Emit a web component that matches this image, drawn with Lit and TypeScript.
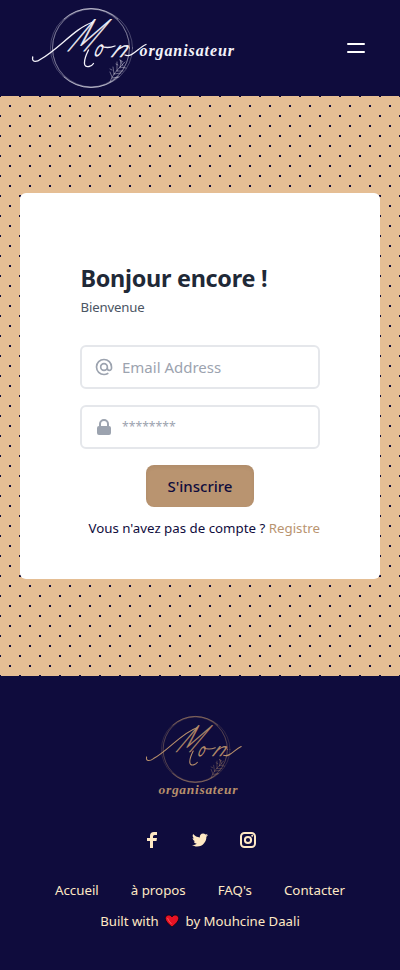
import { LitElement, html, css, svg } from "lit";
import { customElement, property } from "lit/decorators.js";

@customElement("brand-logo")
class BrandLogo extends LitElement {
  @property({ type: Boolean }) stacked = false;

  static styles = css`
    :host { display: block; line-height: 0; }
    svg { display: block; overflow: visible; }
    .line { fill: none; stroke: currentColor; stroke-linecap: round; }
    .script { font: italic 300 43px Lato, sans-serif; fill: currentColor; }
    .word { font: italic 700 16px "Liberation Serif", serif; fill: currentColor; }
    .small { font-size: 13.5px; }
  `;

  render() {
    const emblem = svg`
      <g class="line" stroke-width="1">
        <ellipse cx="59" cy="40" rx="38.500" ry="39.500" opacity=".3"></ellipse>
        <ellipse cx="58" cy="40" rx="39.500" ry="39" opacity=".25"></ellipse>
        <ellipse cx="60.500" cy="40" rx="40" ry="39" opacity=".25"></ellipse>
        <path d="M32 11Q44 .5 59 .5T86 11M32 69Q44 79.500 59 79.500T86 69" opacity=".5"></path>
      </g>
      <g class="line" stroke-width=".8" opacity=".5">
        <path d="M78 74Q80 66 93 54M80 69l-2-5m4 2l-1-7m4 4l0-9m3 6l1-7m2 5l-3-6M80 70l7-1m-5-3l7-1m-4-2l6 0m-3-4l6 1M78 61l2 1m4-6l2 1m2-5l3 2"></path>
      </g>
      <g class="line" stroke-width="1.300">
        <path d="M.7 49C-.5 55 5 54 9 51C27 41 43 20 61 14"></path>
        <path d="M56.500 42C51 53 51 60 57 58.500Q60 58 61.500 55.500"></path>
        <path d="M69 38Q75 41 83 38M93 47C100 50 106 40 114 36.500"></path>
      </g>
      <text class="script" transform="matrix(.62 0 -.8 1.040 34 43)" stroke="currentColor" stroke-width=".8">M</text>
      <text class="script" transform="matrix(.34 0 -.18 .52 61.500 47.500)" stroke="currentColor" stroke-width="1.500">o</text>
      <text class="script" transform="matrix(.64 0 -.34 .54 78 48.500)" stroke="currentColor" stroke-width="1">n</text>`;
    return this.stacked
      ? html`<svg width="96" height="82" viewBox="0 0 96 82" role="img" aria-label="Mon organisateur">
          <g transform="scale(.835)">${emblem}</g>
          <text class="word small" x="12.500" y="77.500" textLength="79">organisateur</text>
        </svg>`
      : html`<svg width="203" height="80" viewBox="0 0 203 80" role="img" aria-label="Mon organisateur">
          ${emblem}<text class="word" x="107.500" y="48" textLength="94.500">organisateur</text>
        </svg>`;
  }
}

@customElement("app-root")
class AppRoot extends LitElement {
  static styles = css`
    :host {
      display: block;
      font-family: "Noto Sans", "Open Sans", sans-serif;
      color: #0f0c3d;
    }
    * { box-sizing: border-box; }
    header, footer { background: #0f0c3d; }
    header {
      height: 96px; padding: 8px 35px 8px 32px;
      display: flex; align-items: center; justify-content: space-between;
      color: #f4f3fa;
    }
    .menu { display: grid; gap: 6px; padding: 0; border: 0; background: none; }
    .menu span { width: 18px; height: 2px; background: #fff; border-radius: 1px; }
    main {
      height: 580px; padding: 0 20px; display: grid; grid-template-columns: minmax(0, 1fr); align-items: center;
      background-color: #e5be94;
      background-image: radial-gradient(#0f0c3d 1px, transparent 1px), radial-gradient(#0f0c3d 1px, transparent 1px);
      background-size: 20px 20px;
      background-position: 0 0, 10px 10px;
    }
    form { height: 386px; padding: 69px 60px 0; background: #fff; border-radius: 6px; display: flex; flex-direction: column; }
    h1 { margin: 0 0 0 .5px; font-size: 23.4px; letter-spacing: -.28px; line-height: 33px; font-weight: 700; color: #1f2937; white-space: nowrap; }
    .sub { margin: 1px 0 27px .5px; font-size: 13.2px; letter-spacing: -.15px; line-height: 22px; color: #4b5563; }
    .field {
      height: 44px; margin-bottom: 16px; padding: 0 12px; border: 2px solid #e5e7eb; border-radius: 6px;
      display: flex; align-items: center; gap: 8px; color: #9ca3af;
    }
    .field svg { flex: none; }
    input { flex: 1; min-width: 0; padding: 0; border: 0; outline: 0; background: none; font: 15px "Noto Sans", sans-serif; }
    input::placeholder { color: #9ca3af; opacity: 1; }
    input[type="password"] { font-size: 12.2px; padding-bottom: 2px; }
    .submit {
      align-self: center; width: 108px; height: 42px; padding: 0; border: 0; border-radius: 8px;
      background: #b99470; color: #0f0c3d; font: 500 15px "Noto Sans", sans-serif;
      box-shadow: inset 0 2px 4px rgba(0, 0, 0, 0.06);
    }
    .register { margin: 11px 0 0; font-size: 13.3px; line-height: 20px; text-align: right; white-space: nowrap; }
    .register a { color: #b99470; }
    footer { height: 294px; padding-top: 40px; display: flex; flex-direction: column; align-items: center; color: #ffe9c4; font-size: 13.2px; }
    footer brand-logo { color: #b78f6b; margin-right: 13px; }
    .social { display: flex; gap: 32px; margin-top: 34px; }
    .social svg { display: block; }
    nav { display: flex; gap: 32px; margin-top: 32px; font-size: 13.3px; line-height: 20px; }
    .credit { margin: 11px 0 0; line-height: 20px; display: flex; align-items: center; gap: 5.5px; }
  `;

  render() {
    return html`
      <header>
        <brand-logo></brand-logo>
        <button class="menu" aria-label="Menu"><span></span><span></span></button>
      </header>
      <main>
        <form>
          <h1>Bonjour encore !</h1>
          <p class="sub">Bienvenue</p>
          <label class="field">
            <svg width="20" height="20" viewBox="0 0 24 24" fill="none" stroke="currentColor" stroke-width="2" stroke-linecap="round" stroke-linejoin="round"><path d="M16 12a4 4 0 10-8 0 4 4 0 008 0zm0 0v1.500a2.500 2.500 0 005 0V12a9 9 0 10-9 9m4.500-1.206a8.959 8.959 0 01-4.500 1.207"></path></svg>
            <input type="email" placeholder="Email Address" />
          </label>
          <label class="field">
            <svg width="20" height="20" viewBox="0 0 20 20" fill="currentColor"><path fill-rule="evenodd" d="M5 9V7a5 5 0 0110 0v2a2 2 0 012 2v5a2 2 0 01-2 2H5a2 2 0 01-2-2v-5a2 2 0 012-2zm8-2v2H7V7a3 3 0 016 0z"></path></svg>
            <input type="password" placeholder="********" />
          </label>
          <button class="submit" type="button">S'inscrire</button>
          <p class="register">Vous n'avez pas de compte ? <a>Registre</a></p>
        </form>
      </main>
      <footer>
        <brand-logo stacked></brand-logo>
        <div class="social">
          <svg width="16" height="16" viewBox="0 0 16 16" fill="currentColor"><path d="M6 16V9H3V6h3V4q0-4 4-4h3v3h-2.300Q9 3 9 4.500V6h4l-.5 3H9v7z"></path></svg>
          <svg width="16" height="16" viewBox="0 0 24 24" fill="currentColor"><path d="M24 4.557c-.883.392-1.832.656-2.828.775 1.017-.609 1.798-1.574 2.165-2.724-.951.564-2.005.974-3.127 1.195-.897-.957-2.178-1.555-3.594-1.555-3.179 0-5.515 2.966-4.797 6.045-4.091-.205-7.719-2.165-10.148-5.144-1.290 2.213-.669 5.108 1.523 6.574-.806-.026-1.566-.247-2.229-.616-.054 2.281 1.581 4.415 3.949 4.890-.693.188-1.452.232-2.224.084.626 1.956 2.444 3.379 4.600 3.419-2.070 1.623-4.678 2.348-7.290 2.040 2.179 1.397 4.768 2.212 7.548 2.212 9.142 0 14.307-7.721 13.995-14.646.962-.695 1.797-1.562 2.457-2.549z"></path></svg>
          <svg width="16" height="16" viewBox="0 0 16 16" fill="none" stroke="currentColor" stroke-width="2"><rect x="1" y="1" width="14" height="14" rx="3.500"></rect><circle cx="8" cy="8" r="3.100"></circle><circle cx="12.200" cy="3.800" r="1" fill="currentColor" stroke="none"></circle></svg>
        </div>
        <nav><a>Accueil</a><a>à propos</a><a>FAQ's</a><a>Contacter</a></nav>
        <p class="credit">
          <span>Built with</span>
          <svg width="16" height="14" viewBox="0 0 15 14"><path d="M7.500 13Q1 8 .8 4.500C.6 1 5.500-.5 7.500 3C9.500-.5 14.400 1 14.200 4.500Q14 8 7.500 13z" fill="#e81224" stroke="#090611" stroke-width=".8"></path><path d="M3 4q1 3 4 6" fill="none" stroke="#f4545b" stroke-width="1"></path></svg>
          <span>by Mouhcine Daali</span>
        </p>
      </footer>
    `;
  }
}
